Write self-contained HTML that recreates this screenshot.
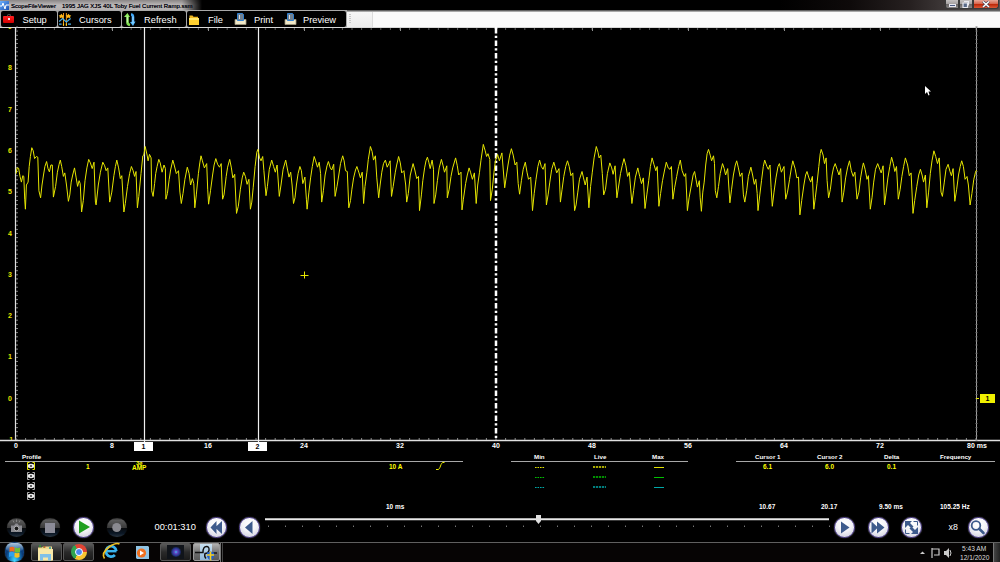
<!DOCTYPE html>
<html><head><meta charset="utf-8">
<style>
*{margin:0;padding:0;box-sizing:border-box}
html,body{width:1000px;height:562px;overflow:hidden;background:#000}
body{position:relative;font-family:"Liberation Sans",sans-serif;color:#fff}
.a{position:absolute}
.title{left:0;top:0;width:1000px;height:11px;background:linear-gradient(90deg,#000 0,#000 78%,#0e0a0a 85%,#262020 91%,#3e3838 94.5%,#5a5252 100%)}
.tglow{left:0;top:0;width:202px;height:10px;background:linear-gradient(90deg,rgba(0,0,0,0) 0,rgba(0,0,0,0) 90%,#000 100%),linear-gradient(180deg,#8a8686 0,#bcb8b8 50%,#b4b0b0 100%)}
.ttext{top:1px;font-size:6px;line-height:10px;color:#0a0a18;white-space:nowrap;text-shadow:0 0 0.4px #000}
.tbar{left:0;top:11px;width:1000px;height:17px;background:#fafafa}
.tbtn{top:11px;height:16px;background:#000;border-radius:2px}
.tlbl{font-size:9.3px;line-height:16px;color:#fff;top:11.5px}
.yl{left:4px;width:12px;text-align:center;font-size:7px;line-height:10px;color:#e8e800;font-weight:bold}
.xl{top:441px;width:30px;text-align:center;font-size:7px;line-height:10px;color:#fff;font-weight:bold}
.hd{font-size:6.2px;line-height:8px;color:#fff;font-weight:bold;top:452.5px;white-space:nowrap}
.yv{font-size:6.5px;line-height:8px;color:#ffff00;font-weight:bold;white-space:nowrap}
.wv{font-size:6.5px;line-height:8px;color:#fff;font-weight:bold;top:502.7px;white-space:nowrap}
.cb{width:21px;height:21px;border-radius:50%;background:radial-gradient(circle at 50% 30%,#fff 0,#f4f4f8 45%,#c8c8d8 100%);border:1px solid #5c4c9c;box-shadow:0 0 1px #888}
.db{width:19.5px;height:19.5px;border-radius:50%;background:linear-gradient(180deg,#2a2a2a 0,#5a5a5a 12%,#3a3a3a 50%,#080a0c 53%,#0a1624 80%,#283440 100%);box-shadow:0 0 1px #222}
.tb{top:543px;height:18px;border:1px solid #555;border-radius:2px;background:linear-gradient(180deg,#5a5a5a 0,#2a2a2a 50%,#1a1a1a 100%)}
</style></head><body>

<div class="a" style="left:0;top:27px;width:16px;height:413px;overflow:hidden"><div class="a yl" style="top:-5.0px">9</div><div class="a yl" style="top:36.3px">8</div><div class="a yl" style="top:77.6px">7</div><div class="a yl" style="top:118.9px">6</div><div class="a yl" style="top:160.2px">5</div><div class="a yl" style="top:201.5px">4</div><div class="a yl" style="top:242.8px">3</div><div class="a yl" style="top:284.1px">2</div><div class="a yl" style="top:325.4px">1</div><div class="a yl" style="top:366.7px">0</div><div class="a yl" style="top:408.0px">-1</div></div>
<!-- Title bar -->
<div class="a title"></div>
<div class="a tglow"></div>
<div class="a" style="left:0;top:1px;width:9px;height:9px;background:linear-gradient(135deg,#6ab0ff,#1a50b0)"></div>
<svg class="a" style="left:0;top:1px" width="9" height="9"><path d="M0 5 L2 5 L3 2 L5 8 L6 4 L9 4" stroke="#fff" stroke-width="1" fill="none"/></svg>
<div class="a ttext" style="left:11px">ScopeFileViewer</div><div class="a ttext" style="left:62px">1995 JAG XJS 40L Toby Fuel Current Ramp.ssm</div>
<div class="a" style="left:945px;top:0;width:14px;height:9px;background:linear-gradient(180deg,#c4c0c0 0,#a8a4a4 45%,#6a6666 55%,#8a8686 100%);border:1px solid #3a3a3a;border-top:0;border-radius:0 0 0 3px"></div>
<div class="a" style="left:949.5px;top:4.5px;width:5.5px;height:1.5px;background:#4a5a80;outline:1px solid #e8e8f0"></div>
<div class="a" style="left:959px;top:0;width:14px;height:9px;background:linear-gradient(180deg,#c4c0c0 0,#a8a4a4 45%,#6a6666 55%,#8a8686 100%);border:1px solid #3a3a3a;border-top:0"></div>
<svg class="a" style="left:959px;top:0" width="14" height="9"><path d="M5 1.5h4.5v4" stroke="#e8e8f0" stroke-width="1.2" fill="none"/><path d="M4 3h4.5v4.5h-4.5z" fill="#5a6a88" stroke="#e8e8f0" stroke-width="1.2"/></svg>
<div class="a" style="left:973px;top:0;width:26px;height:9px;background:linear-gradient(180deg,#e8a898 0,#d86850 45%,#c02808 55%,#d85838 100%);border:1px solid #3a3a3a;border-top:0;border-radius:0 0 3px 0"></div>
<svg class="a" style="left:973px;top:0" width="26" height="9"><path d="M10 1.5 L16 7 M16 1.5 L10 7" stroke="#3a3a50" stroke-width="2.6"/><path d="M10 1.5 L16 7 M16 1.5 L10 7" stroke="#fff" stroke-width="1.6"/></svg>
<!-- Toolbar -->
<div class="a tbar"></div>
<div class="a" style="left:347px;top:9.5px;width:653px;height:2.5px;background:linear-gradient(180deg,#3a3a3a,#8a8a8a 50%,#c8c8c8)"></div><div class="a" style="left:0;top:9.5px;width:347px;height:1px;background:#606060"></div>
<div class="a" style="left:0;top:10px;width:347px;height:18px;background:#a8a8a8"></div>
<div class="a" style="left:347px;top:12px;width:25px;height:15px;background:linear-gradient(180deg,#f6f6f6,#ececec)"></div>
<div class="a" style="left:372px;top:12px;width:1px;height:15px;background:#dcdcdc"></div>
<svg class="a" style="left:347px;top:12px" width="6" height="15"><path d="M2 2.5h2 M2 4.5h2 M2 6.5h2 M2 8.5h2 M2 10.5h2" stroke="#c8c8c8" stroke-width="1"/></svg>
<div class="a tbtn" style="left:1px;width:56px"></div>
<div class="a tbtn" style="left:58px;width:63px"></div>
<div class="a tbtn" style="left:122px;width:64px"></div>
<div class="a tbtn" style="left:187px;width:159px"></div>
<!-- icons -->
<div class="a" style="left:3px;top:15.5px;width:11px;height:7.5px;background:linear-gradient(180deg,#ff2020,#d00000);border-radius:1px"></div>
<div class="a" style="left:6.5px;top:14px;width:4px;height:2px;border:1px solid #555;border-bottom:0;border-radius:2px 2px 0 0"></div>
<div class="a" style="left:8px;top:18px;width:1.5px;height:1.5px;background:#fff;border-radius:50%"></div>
<svg class="a" style="left:56px;top:10px" width="20" height="18"><path d="M7.5 3v13 M10.4 3v13" stroke="#e89010" stroke-width="1"/><path d="M5.4 3.8 l1.2 1.4 l1.6 0.3 l-1.2 1.2 l0.2 1.6 l-1.8 -0.8 l-1.8 0.8 l0.2 -1.6 l-1.2 -1.2 l1.6 -0.3z M12.5 3.8 l1.2 1.4 l1.6 0.3 l-1.2 1.2 l0.2 1.6 l-1.8 -0.8 l-1.8 0.8 l0.2 -1.6 l-1.2 -1.2 l1.6 -0.3z" fill="#ffb818"/><path d="M3.2 11.5 L6.5 8.5 L10.4 12 L14.6 8.5" stroke="#48b0e8" stroke-width="1.2" fill="none"/><path d="M3 14.2h2.6 M12 14.2h3" stroke="#48b0e8" stroke-width="1.3"/><path d="M7.5 13.5v2 M10.4 13.5v2" stroke="#ffd020" stroke-width="1.2"/></svg>
<svg class="a" style="left:120px;top:10px" width="20" height="18"><path d="M11 4.5 q2 0 2 2.5 V13" stroke="#40a8f8" stroke-width="2.6" fill="none"/><path d="M10 12 L13 16 L15.5 11.5z" fill="#50b8ff"/><path d="M13 6.5 V13.5" stroke="#c8e8ff" stroke-width="0.8"/><path d="M7.5 6 V12.5 q0 2 2.5 2.5" stroke="#80e050" stroke-width="2.6" fill="none"/><path d="M4 7 L7.5 3 L9 5.5 L10 7z" fill="#90f060"/><path d="M7.3 6.5 V12.5" stroke="#e8ffe0" stroke-width="0.8"/></svg>
<svg class="a" style="left:188px;top:12px" width="13" height="13"><path d="M1.5 3.5 h3 l1 1.2 h4.5 v1.5 h-8.5z" fill="#f0b820"/><path d="M1 6 h10 v7 h-10z" fill="#ffd030"/><path d="M1 6 h10 v2 h-10z" fill="#ffe870"/></svg>
<svg class="a" style="left:234px;top:12px" width="13" height="13"><path d="M1 7.5h11v5h-11z" fill="#f0e8c8" stroke="#a09880" stroke-width="0.8"/><path d="M3.5 1.5h5l1 1v6h-6z" fill="#708090" stroke="#3080d0" stroke-width="1"/><path d="M5.5 3v4" stroke="#ddd" stroke-width="1"/></svg>
<svg class="a" style="left:284px;top:12px" width="13" height="13"><path d="M1 7.5h11v5h-11z" fill="#f0e8c8" stroke="#a09880" stroke-width="0.8"/><path d="M3.5 1.5h5l1 1v6h-6z" fill="#708090" stroke="#3080d0" stroke-width="1"/><path d="M5.5 3v4" stroke="#ddd" stroke-width="1"/></svg>

<div class="a tlbl" style="left:22.5px">Setup</div>
<div class="a tlbl" style="left:79px">Cursors</div>
<div class="a tlbl" style="left:144px">Refresh</div>
<div class="a tlbl" style="left:208px">File</div>
<div class="a tlbl" style="left:254px">Print</div>
<div class="a tlbl" style="left:303px">Preview</div>

<!-- Plot -->
<svg class="a" style="left:0;top:0" width="1000" height="562">
  <path d="M0 27.5h1000" stroke="#d8d8d8" stroke-width="1"/>
  <path d="M16.0 28v2 M25.6 28v2 M35.2 28v2 M44.8 28v2 M54.4 28v2 M64.0 28v2 M73.6 28v2 M83.2 28v2 M92.8 28v2 M102.4 28v2 M112.0 28v2 M121.6 28v2 M131.2 28v2 M140.8 28v2 M150.4 28v2 M160.0 28v2 M169.6 28v2 M179.2 28v2 M188.8 28v2 M198.4 28v2 M208.0 28v2 M217.6 28v2 M227.2 28v2 M236.8 28v2 M246.4 28v2 M256.0 28v2 M265.6 28v2 M275.2 28v2 M284.8 28v2 M294.4 28v2 M304.0 28v2 M313.6 28v2 M323.2 28v2 M332.8 28v2 M342.4 28v2 M352.0 28v2 M361.6 28v2 M371.2 28v2 M380.8 28v2 M390.4 28v2 M400.0 28v2 M409.6 28v2 M419.2 28v2 M428.8 28v2 M438.4 28v2 M448.0 28v2 M457.6 28v2 M467.2 28v2 M476.8 28v2 M486.4 28v2 M496.0 28v2 M505.6 28v2 M515.2 28v2 M524.8 28v2 M534.4 28v2 M544.0 28v2 M553.6 28v2 M563.2 28v2 M572.8 28v2 M582.4 28v2 M592.0 28v2 M601.6 28v2 M611.2 28v2 M620.8 28v2 M630.4 28v2 M640.0 28v2 M649.6 28v2 M659.2 28v2 M668.8 28v2 M678.4 28v2 M688.0 28v2 M697.6 28v2 M707.2 28v2 M716.8 28v2 M726.4 28v2 M736.0 28v2 M745.6 28v2 M755.2 28v2 M764.8 28v2 M774.4 28v2 M784.0 28v2 M793.6 28v2 M803.2 28v2 M812.8 28v2 M822.4 28v2 M832.0 28v2 M841.6 28v2 M851.2 28v2 M860.8 28v2 M870.4 28v2 M880.0 28v2 M889.6 28v2 M899.2 28v2 M908.8 28v2 M918.4 28v2 M928.0 28v2 M937.6 28v2 M947.2 28v2 M956.8 28v2 M966.4 28v2 M976.0 28v2" stroke="#707070" stroke-width="0.8"/><path d="M112.5 28v3 M208.5 28v3 M304.5 28v3 M400.5 28v3 M496.5 28v3 M592.5 28v3 M688.5 28v3 M784.5 28v3 M880.5 28v3" stroke="#909090" stroke-width="1"/>
  <path d="M15.5 27v414" stroke="#e0e0e0" stroke-width="1.2"/>
  <path d="M16 27.0h2 M16 31.1h2 M16 35.3h2 M16 39.4h2 M16 43.5h2 M16 47.6h2 M16 51.8h2 M16 55.9h2 M16 60.0h2 M16 64.2h2 M16 68.3h2 M16 72.4h2 M16 76.6h2 M16 80.7h2 M16 84.8h2 M16 88.9h2 M16 93.1h2 M16 97.2h2 M16 101.3h2 M16 105.5h2 M16 109.6h2 M16 113.7h2 M16 117.9h2 M16 122.0h2 M16 126.1h2 M16 130.2h2 M16 134.4h2 M16 138.5h2 M16 142.6h2 M16 146.8h2 M16 150.9h2 M16 155.0h2 M16 159.2h2 M16 163.3h2 M16 167.4h2 M16 171.5h2 M16 175.7h2 M16 179.8h2 M16 183.9h2 M16 188.1h2 M16 192.2h2 M16 196.3h2 M16 200.5h2 M16 204.6h2 M16 208.7h2 M16 212.8h2 M16 217.0h2 M16 221.1h2 M16 225.2h2 M16 229.4h2 M16 233.5h2 M16 237.6h2 M16 241.8h2 M16 245.9h2 M16 250.0h2 M16 254.2h2 M16 258.3h2 M16 262.4h2 M16 266.5h2 M16 270.7h2 M16 274.8h2 M16 278.9h2 M16 283.1h2 M16 287.2h2 M16 291.3h2 M16 295.4h2 M16 299.6h2 M16 303.7h2 M16 307.8h2 M16 312.0h2 M16 316.1h2 M16 320.2h2 M16 324.4h2 M16 328.5h2 M16 332.6h2 M16 336.8h2 M16 340.9h2 M16 345.0h2 M16 349.1h2 M16 353.3h2 M16 357.4h2 M16 361.5h2 M16 365.7h2 M16 369.8h2 M16 373.9h2 M16 378.1h2 M16 382.2h2 M16 386.3h2 M16 390.4h2 M16 394.6h2 M16 398.7h2 M16 402.8h2 M16 407.0h2 M16 411.1h2 M16 415.2h2 M16 419.3h2 M16 423.5h2 M16 427.6h2 M16 431.7h2 M16 435.9h2 M16 440.0h2" stroke="#a0a0a0" stroke-width="0.8"/>
  <path d="M0 440.5h1000" stroke="#e0e0e0" stroke-width="1.5"/>
  <path d="M16.0 440v-2 M25.6 440v-2 M35.2 440v-2 M44.8 440v-2 M54.4 440v-2 M64.0 440v-2 M73.6 440v-2 M83.2 440v-2 M92.8 440v-2 M102.4 440v-2 M112.0 440v-2 M121.6 440v-2 M131.2 440v-2 M140.8 440v-2 M150.4 440v-2 M160.0 440v-2 M169.6 440v-2 M179.2 440v-2 M188.8 440v-2 M198.4 440v-2 M208.0 440v-2 M217.6 440v-2 M227.2 440v-2 M236.8 440v-2 M246.4 440v-2 M256.0 440v-2 M265.6 440v-2 M275.2 440v-2 M284.8 440v-2 M294.4 440v-2 M304.0 440v-2 M313.6 440v-2 M323.2 440v-2 M332.8 440v-2 M342.4 440v-2 M352.0 440v-2 M361.6 440v-2 M371.2 440v-2 M380.8 440v-2 M390.4 440v-2 M400.0 440v-2 M409.6 440v-2 M419.2 440v-2 M428.8 440v-2 M438.4 440v-2 M448.0 440v-2 M457.6 440v-2 M467.2 440v-2 M476.8 440v-2 M486.4 440v-2 M496.0 440v-2 M505.6 440v-2 M515.2 440v-2 M524.8 440v-2 M534.4 440v-2 M544.0 440v-2 M553.6 440v-2 M563.2 440v-2 M572.8 440v-2 M582.4 440v-2 M592.0 440v-2 M601.6 440v-2 M611.2 440v-2 M620.8 440v-2 M630.4 440v-2 M640.0 440v-2 M649.6 440v-2 M659.2 440v-2 M668.8 440v-2 M678.4 440v-2 M688.0 440v-2 M697.6 440v-2 M707.2 440v-2 M716.8 440v-2 M726.4 440v-2 M736.0 440v-2 M745.6 440v-2 M755.2 440v-2 M764.8 440v-2 M774.4 440v-2 M784.0 440v-2 M793.6 440v-2 M803.2 440v-2 M812.8 440v-2 M822.4 440v-2 M832.0 440v-2 M841.6 440v-2 M851.2 440v-2 M860.8 440v-2 M870.4 440v-2 M880.0 440v-2 M889.6 440v-2 M899.2 440v-2 M908.8 440v-2 M918.4 440v-2 M928.0 440v-2 M937.6 440v-2 M947.2 440v-2 M956.8 440v-2 M966.4 440v-2 M976.0 440v-2" stroke="#b0b0b0" stroke-width="0.8"/>
  <path d="M976.5 27v413" stroke="#a0a0a0" stroke-width="1"/>
  <path d="M975.5 27.0h2 M975.5 31.1h2 M975.5 35.3h2 M975.5 39.4h2 M975.5 43.5h2 M975.5 47.6h2 M975.5 51.8h2 M975.5 55.9h2 M975.5 60.0h2 M975.5 64.2h2 M975.5 68.3h2 M975.5 72.4h2 M975.5 76.6h2 M975.5 80.7h2 M975.5 84.8h2 M975.5 88.9h2 M975.5 93.1h2 M975.5 97.2h2 M975.5 101.3h2 M975.5 105.5h2 M975.5 109.6h2 M975.5 113.7h2 M975.5 117.9h2 M975.5 122.0h2 M975.5 126.1h2 M975.5 130.2h2 M975.5 134.4h2 M975.5 138.5h2 M975.5 142.6h2 M975.5 146.8h2 M975.5 150.9h2 M975.5 155.0h2 M975.5 159.2h2 M975.5 163.3h2 M975.5 167.4h2 M975.5 171.5h2 M975.5 175.7h2 M975.5 179.8h2 M975.5 183.9h2 M975.5 188.1h2 M975.5 192.2h2 M975.5 196.3h2 M975.5 200.5h2 M975.5 204.6h2 M975.5 208.7h2 M975.5 212.8h2 M975.5 217.0h2 M975.5 221.1h2 M975.5 225.2h2 M975.5 229.4h2 M975.5 233.5h2 M975.5 237.6h2 M975.5 241.8h2 M975.5 245.9h2 M975.5 250.0h2 M975.5 254.2h2 M975.5 258.3h2 M975.5 262.4h2 M975.5 266.5h2 M975.5 270.7h2 M975.5 274.8h2 M975.5 278.9h2 M975.5 283.1h2 M975.5 287.2h2 M975.5 291.3h2 M975.5 295.4h2 M975.5 299.6h2 M975.5 303.7h2 M975.5 307.8h2 M975.5 312.0h2 M975.5 316.1h2 M975.5 320.2h2 M975.5 324.4h2 M975.5 328.5h2 M975.5 332.6h2 M975.5 336.8h2 M975.5 340.9h2 M975.5 345.0h2 M975.5 349.1h2 M975.5 353.3h2 M975.5 357.4h2 M975.5 361.5h2 M975.5 365.7h2 M975.5 369.8h2 M975.5 373.9h2 M975.5 378.1h2 M975.5 382.2h2 M975.5 386.3h2 M975.5 390.4h2 M975.5 394.6h2 M975.5 398.7h2 M975.5 402.8h2 M975.5 407.0h2 M975.5 411.1h2 M975.5 415.2h2 M975.5 419.3h2 M975.5 423.5h2 M975.5 427.6h2 M975.5 431.7h2 M975.5 435.9h2 M975.5 440.0h2" stroke="#707070" stroke-width="1"/>
  <path d="M496 27.9v412" stroke="#fff" stroke-width="2.5" stroke-dasharray="5.5 2.3 2.4 2.3"/><path d="M496 27v2" stroke="#fff" stroke-width="2.5"/>
  <path d="M144.5 27v416 M258.5 27v416" stroke="#f0f0f0" stroke-width="1.2"/>
  <path d="M16.1 173.6 L17.1 167.9 L18.6 168.2 L20.0 176.4 L21.4 182.1 L22.8 175.7 L23.8 176.4 L24.7 199.2 L25.4 209.2 L26.4 185.0 L28.1 182.1 L29.2 166.5 L30.4 156.5 L31.8 147.7 L33.2 150.8 L34.6 158.6 L36.4 156.5 L37.8 157.2 L38.9 190.7 L40.6 197.8 L42.0 185.0 L43.5 175.0 L44.9 166.5 L46.6 161.5 L48.0 168.6 L49.4 171.9 L50.9 165.0 L52.3 165.0 L53.4 197.1 L55.6 186.4 L57.4 172.2 L59.1 164.3 L60.3 160.1 L61.7 166.5 L63.4 176.4 L64.8 172.9 L66.5 185.0 L68.4 201.3 L69.8 194.9 L71.2 182.1 L72.7 175.0 L74.5 167.9 L76.2 177.9 L77.6 186.4 L79.1 180.7 L80.2 183.6 L81.6 212.0 L83.3 200.6 L85.0 180.7 L86.9 167.9 L88.7 159.4 L90.4 162.9 L92.2 168.6 L94.0 162.2 L95.4 202.1 L96.1 204.9 L98.3 185.0 L100.4 172.2 L102.8 162.2 L104.7 165.8 L106.1 170.7 L107.8 167.9 L109.7 202.1 L111.8 192.1 L113.9 175.7 L115.4 166.5 L116.8 160.1 L118.6 167.9 L120.3 178.6 L121.8 175.7 L123.9 212.0 L125.3 203.5 L127.5 186.4 L129.6 173.6 L131.4 166.5 L133.1 170.7 L134.6 176.4 L136.0 171.5 L137.4 207.8 L138.8 196.4 L141.0 173.6 L142.8 155.8 L143.8 155.1 L145.2 146.5 L147.1 155.1 L148.1 160.8 L149.5 154.4 L151.1 157.9 L151.7 190.7 L153.1 196.4 L154.6 183.6 L155.7 173.6 L157.1 166.5 L158.8 159.4 L160.2 162.9 L162.1 172.2 L164.0 165.0 L165.4 168.6 L165.9 199.2 L167.4 193.5 L169.2 179.3 L170.6 170.0 L172.8 160.1 L174.2 165.0 L176.3 173.6 L178.5 170.7 L179.9 192.1 L181.3 203.5 L183.0 193.5 L184.9 179.3 L187.3 167.2 L189.1 173.6 L190.6 185.0 L192.4 178.6 L193.8 183.6 L194.8 207.8 L196.3 194.9 L198.4 173.6 L199.8 162.9 L201.0 155.8 L202.4 160.8 L204.4 167.9 L206.7 163.6 L207.7 189.2 L208.6 204.2 L210.5 190.7 L212.6 175.0 L214.1 165.0 L215.8 158.6 L217.6 164.3 L219.5 167.2 L221.2 163.6 L222.6 199.2 L224.0 194.9 L226.2 176.4 L227.6 167.2 L229.7 159.4 L231.4 167.9 L232.8 177.9 L234.7 174.3 L236.5 213.4 L238.3 206.3 L240.4 189.2 L242.2 177.9 L243.7 172.2 L245.4 176.4 L247.1 184.3 L248.9 179.3 L250.4 209.2 L251.8 202.1 L253.2 187.8 L255.1 166.5 L256.8 152.2 L257.9 149.4 L259.6 157.9 L261.0 160.8 L262.7 156.5 L263.9 170.7 L266.0 195.7 L267.4 186.4 L269.3 169.3 L271.7 160.1 L273.6 166.5 L275.3 172.2 L277.1 165.0 L279.3 196.4 L281.0 185.0 L283.1 169.3 L285.7 160.1 L287.6 170.0 L289.0 177.1 L290.7 172.2 L292.1 185.0 L293.5 203.5 L295.0 197.8 L296.4 185.0 L298.1 173.6 L299.9 166.5 L301.4 170.7 L302.8 183.6 L304.9 177.1 L306.4 199.2 L307.1 209.2 L308.9 192.1 L310.6 177.9 L312.3 166.5 L314.2 156.5 L315.6 160.8 L317.5 167.2 L319.2 162.2 L320.6 173.6 L321.7 202.1 L323.4 190.7 L325.1 175.0 L327.0 165.8 L328.4 161.5 L330.3 167.9 L331.7 170.0 L333.7 164.3 L335.1 196.4 L337.0 186.4 L338.8 175.0 L340.5 163.6 L342.7 155.8 L344.1 160.8 L345.5 170.7 L347.3 171.5 L348.8 207.8 L350.5 200.6 L351.9 189.2 L353.6 177.9 L355.5 170.0 L356.9 166.5 L359.0 172.9 L360.4 177.9 L362.2 172.2 L363.6 203.5 L365.0 186.4 L366.9 172.2 L368.3 159.4 L370.4 146.5 L372.1 151.5 L373.5 160.1 L375.4 155.8 L376.8 177.9 L378.7 197.8 L380.1 185.0 L381.8 172.2 L383.5 163.6 L385.4 160.1 L387.2 167.2 L388.9 163.6 L390.1 160.8 L391.5 196.4 L393.2 186.4 L395.3 172.2 L396.7 165.0 L398.6 156.5 L400.3 162.9 L401.7 172.9 L403.9 170.7 L405.7 185.0 L406.7 202.1 L408.3 193.5 L410.3 175.0 L412.0 167.9 L413.1 163.6 L414.8 170.0 L416.7 178.6 L418.5 176.4 L419.5 210.6 L421.4 194.9 L422.8 180.7 L424.6 167.9 L426.0 160.8 L427.4 157.2 L428.8 162.2 L430.2 168.6 L432.1 160.1 L433.5 169.3 L434.0 203.5 L435.7 194.9 L437.4 180.7 L439.2 167.9 L441.4 159.4 L443.1 165.8 L444.5 172.2 L446.8 165.8 L447.3 197.8 L449.2 189.2 L451.0 176.4 L452.7 167.9 L455.6 157.9 L457.3 165.8 L458.7 175.0 L461.0 172.2 L462.0 209.9 L463.4 199.2 L465.6 183.6 L467.3 175.0 L469.1 167.9 L470.5 172.2 L472.4 179.3 L474.4 172.9 L476.2 203.5 L477.7 185.0 L479.5 172.2 L480.9 160.8 L483.3 144.4 L485.2 150.8 L486.6 156.5 L488.0 153.7 L489.8 159.4 L490.5 200.6 L492.3 189.2 L494.0 172.2 L495.4 160.8 L497.6 154.4 L499.4 160.8 L501.9 152.9 L503.7 175.0 L504.7 187.8 L506.1 177.9 L508.0 165.0 L509.7 155.1 L511.4 148.7 L513.2 155.1 L515.1 165.0 L516.8 162.2 L518.2 183.6 L519.6 194.2 L521.4 180.7 L523.2 169.3 L525.3 162.2 L527.0 172.2 L528.5 179.3 L530.7 177.1 L532.5 210.6 L534.2 193.5 L536.0 179.3 L537.9 166.5 L539.6 160.1 L541.3 166.5 L543.1 169.3 L545.0 163.6 L546.4 204.9 L548.1 194.9 L549.8 182.1 L551.7 169.3 L553.8 162.2 L555.0 166.5 L556.7 172.9 L559.0 168.6 L560.4 202.1 L562.1 189.2 L563.8 176.4 L565.7 166.5 L567.5 160.8 L569.2 166.5 L570.9 175.7 L572.8 172.9 L574.6 210.6 L576.1 204.9 L577.8 192.1 L579.5 179.3 L582.0 171.5 L583.5 177.9 L585.2 185.0 L587.0 177.1 L588.9 207.8 L590.6 186.4 L592.3 172.2 L594.1 157.9 L596.3 146.5 L598.0 152.2 L599.1 157.9 L600.8 155.1 L602.3 173.6 L603.7 194.9 L605.5 189.2 L607.4 173.6 L609.8 162.9 L611.7 167.9 L613.1 174.3 L615.1 165.8 L616.9 197.8 L618.8 185.0 L620.5 173.6 L622.2 165.8 L624.0 158.6 L625.9 165.8 L627.6 176.4 L629.3 172.2 L631.9 203.5 L633.6 190.7 L635.4 177.1 L637.8 167.9 L639.7 176.4 L641.5 183.6 L643.3 177.9 L645.0 208.5 L646.8 194.9 L648.7 180.7 L650.4 166.5 L652.1 157.9 L653.9 164.3 L655.8 170.7 L657.2 166.5 L658.9 206.3 L660.6 193.5 L662.5 180.7 L664.6 170.0 L666.3 162.2 L668.2 167.9 L670.0 169.3 L671.4 166.5 L672.9 199.2 L674.6 187.8 L676.7 176.4 L678.6 166.5 L680.3 160.1 L682.1 170.7 L684.3 176.4 L685.7 173.6 L687.4 210.6 L689.1 197.8 L691.4 185.0 L693.1 175.0 L694.6 171.5 L696.0 179.3 L697.4 187.1 L699.3 180.7 L700.2 197.8 L701.4 211.3 L702.8 192.1 L704.2 182.1 L705.7 165.0 L707.1 153.7 L708.5 149.4 L710.2 155.1 L711.6 160.8 L713.5 155.8 L714.5 163.6 L715.3 190.7 L716.8 197.8 L718.5 186.4 L720.2 173.6 L722.5 163.6 L724.2 168.6 L725.6 175.0 L727.7 168.6 L728.7 185.0 L729.9 202.8 L731.6 189.2 L733.4 175.0 L735.3 165.0 L736.7 160.8 L738.4 167.9 L740.1 176.4 L742.0 172.9 L743.4 194.9 L744.8 202.1 L746.7 190.7 L748.4 176.4 L750.9 167.2 L752.6 175.0 L754.3 184.3 L755.8 179.3 L757.2 193.5 L758.0 210.6 L759.8 194.9 L761.5 180.7 L763.3 166.5 L764.7 160.1 L766.9 166.5 L768.3 169.3 L770.0 165.0 L771.1 187.8 L772.3 206.3 L774.0 192.1 L776.1 177.1 L778.0 166.5 L779.4 163.6 L781.4 172.2 L784.0 166.5 L785.7 199.2 L787.5 192.1 L789.6 179.3 L791.4 167.9 L792.8 160.8 L795.1 168.6 L796.8 177.9 L798.5 177.1 L799.9 214.9 L801.7 200.6 L803.9 185.0 L805.6 175.0 L807.0 171.5 L808.9 177.9 L810.7 182.1 L812.4 176.4 L813.8 209.2 L815.3 197.8 L817.0 183.6 L818.8 166.5 L820.2 153.7 L821.2 149.4 L823.1 155.1 L824.5 163.6 L826.1 157.9 L827.1 180.7 L828.6 197.8 L830.4 189.2 L832.1 175.0 L833.5 167.9 L835.2 163.6 L837.1 169.3 L839.0 175.0 L840.7 168.6 L842.1 202.1 L843.8 192.1 L845.6 177.9 L847.5 167.9 L849.5 160.8 L851.3 170.7 L853.2 176.4 L854.9 172.2 L857.0 199.2 L858.9 192.1 L860.6 177.9 L862.3 167.9 L863.4 162.9 L865.1 169.3 L867.0 179.3 L868.4 175.7 L870.3 209.2 L872.0 197.8 L873.7 182.1 L875.5 169.3 L877.7 163.6 L879.8 169.3 L881.2 172.9 L883.1 165.8 L884.5 204.9 L886.2 192.1 L887.9 177.9 L889.8 166.5 L891.6 157.2 L893.3 163.6 L894.8 171.5 L896.5 166.5 L898.3 199.2 L900.2 189.2 L901.9 176.4 L903.6 166.5 L905.4 157.9 L907.6 165.0 L909.3 175.7 L911.1 172.9 L913.0 213.4 L914.7 200.6 L916.8 186.4 L918.7 175.0 L920.4 169.3 L922.1 175.0 L923.5 182.1 L925.4 175.0 L926.8 207.8 L928.6 192.1 L930.3 173.6 L932.0 160.8 L933.9 150.8 L935.7 156.5 L937.5 163.6 L939.2 157.9 L941.0 192.1 L942.4 196.4 L944.3 182.1 L946.0 169.3 L948.1 164.3 L950.0 171.5 L951.4 175.7 L953.1 168.6 L954.8 201.3 L956.7 189.2 L958.5 175.0 L960.2 166.5 L961.7 160.8 L963.4 166.5 L965.1 179.3 L967.0 176.5 L968.4 185.0 L970.1 205.0 L971.9 193.6 L973.8 179.3 L975.5 172.2 L976.5 170.1" stroke="#e6e600" stroke-width="1" fill="none" stroke-linejoin="round"/>
  <path d="M300.5 275.5h8 M304.5 271.5v7" stroke="#e8e800" stroke-width="1"/>
  <path d="M925 86 L925 94 L927 92 L928.5 95.5 L929.5 95 L928.5 91.5 L931 91.5z" fill="#fff"/>
  <path d="M976 398.5h3" stroke="#e8e800" stroke-width="1"/>
</svg>
<div class="a" style="left:980px;top:394px;width:15px;height:9px;background:#f0f000;color:#000;font-size:7px;line-height:9px;text-align:center;font-weight:bold">1</div>
<div class="a xl" style="left:1px">0</div><div class="a xl" style="left:97px">8</div><div class="a xl" style="left:193px">16</div><div class="a xl" style="left:289px">24</div><div class="a xl" style="left:385px">32</div><div class="a xl" style="left:481px">40</div><div class="a xl" style="left:577px">48</div><div class="a xl" style="left:673px">56</div><div class="a xl" style="left:769px">64</div><div class="a xl" style="left:865px">72</div><div class="a xl" style="left:967px;width:30px;text-align:left">80 ms</div>
<div class="a" style="left:134px;top:442px;width:19px;height:9px;background:#fff;color:#000;font-size:7px;line-height:9px;text-align:center;font-weight:bold">1</div>
<div class="a" style="left:248px;top:442px;width:19px;height:9px;background:#fff;color:#000;font-size:7px;line-height:9px;text-align:center;font-weight:bold">2</div>

<!-- Bottom panel -->
<svg class="a" style="left:0;top:0" width="1000" height="562">
  <path d="M5 461.5h458 M511 461.5h177 M736 461.5h259" stroke="#a8a8a8" stroke-width="1"/>
  <path d="M535 467.5h10" stroke="#e0e000" stroke-width="1" stroke-dasharray="1.6 0.9"/>
  <path d="M535 477.5h10" stroke="#00c000" stroke-width="1" stroke-dasharray="1.6 0.9"/>
  <path d="M535 487.5h10" stroke="#00a8a8" stroke-width="1" stroke-dasharray="1.6 0.9"/>
  <path d="M593 467h13" stroke="#e0e000" stroke-width="1.6" stroke-dasharray="2.2 0.8"/>
  <path d="M593 477h13" stroke="#00c000" stroke-width="1.6" stroke-dasharray="2.2 0.8"/>
  <path d="M593 487h13" stroke="#00a8a8" stroke-width="1.6" stroke-dasharray="2.2 0.8"/>
  <path d="M654 467.5h10" stroke="#e0e000" stroke-width="1"/>
  <path d="M654 477.5h10" stroke="#00c000" stroke-width="1"/>
  <path d="M654 487.5h10" stroke="#00a8a8" stroke-width="1"/>
  <path d="M436 469.5 h2 C440.5 469.5 440.5 462.5 443 462.5 h1.5" stroke="#e8e800" stroke-width="1" fill="none"/>
  <path d="M265 519.2h564" stroke="#e8e8e8" stroke-width="2"/>
  <path d="M268.0 526.2h1 M285.0 526.2h1 M302.0 526.2h1 M319.0 526.2h1 M336.0 526.2h1 M353.0 526.2h1 M370.0 526.2h1 M387.0 526.2h1 M404.0 526.2h1 M421.0 526.2h1 M438.0 526.2h1 M455.0 526.2h1 M472.0 526.2h1 M489.0 526.2h1 M506.0 526.2h1 M523.0 526.2h1 M540.0 526.2h1 M557.0 526.2h1 M574.0 526.2h1 M591.0 526.2h1 M608.0 526.2h1 M625.0 526.2h1 M642.0 526.2h1 M659.0 526.2h1 M676.0 526.2h1 M693.0 526.2h1 M710.0 526.2h1 M727.0 526.2h1 M744.0 526.2h1 M761.0 526.2h1 M778.0 526.2h1 M795.0 526.2h1 M812.0 526.2h1 M829.0 526.2h1" stroke="#aaa" stroke-width="1"/>
  <path d="M536 515h5v6l-2.5 3l-2.5-3z" fill="#e0e0e0"/>
  <path d="M0 542.5h1000" stroke="#606060" stroke-width="1"/>
</svg>
<div class="a hd" style="left:22px">Profile</div>
<div class="a hd" style="left:534px">Min</div>
<div class="a hd" style="left:594px">Live</div>
<div class="a hd" style="left:652px">Max</div>
<div class="a hd" style="left:755px">Cursor 1</div>
<div class="a hd" style="left:817px">Cursor 2</div>
<div class="a hd" style="left:884px">Delta</div>
<div class="a hd" style="left:940px">Frequency</div>
<div class="a yv" style="left:86px;top:462.8px">1</div>
<div class="a yv" style="left:136px;top:461px;font-size:5.5px;line-height:5px">3ø</div>
<div class="a yv" style="left:132px;top:464.3px">AMP</div>
<div class="a yv" style="left:389px;top:462.8px">10 A</div>
<div class="a yv" style="left:763px;top:462.8px">6.1</div>
<div class="a yv" style="left:825px;top:462.8px">6.0</div>
<div class="a yv" style="left:887px;top:462.8px">0.1</div>
<div class="a wv" style="left:386px">10 ms</div>
<div class="a wv" style="left:759px">10.67</div>
<div class="a wv" style="left:821px">20.17</div>
<div class="a wv" style="left:879px">9.50 ms</div>
<div class="a wv" style="left:940px">105.25 Hz</div>
<!-- eye icons -->
<svg class="a" style="left:0;top:0" width="60" height="510">
<path d="M29.5 462.5h-2v7h2 M32.5 462.5h2v7h-2" stroke="#e8e800" stroke-width="1" fill="none"/><ellipse cx="31" cy="466.0" rx="3.3" ry="2.2" fill="#e8e8e8"/><circle cx="31" cy="466.0" r="1" fill="#333"/><path d="M29.5 472.5h-2v7h2 M32.5 472.5h2v7h-2" stroke="#b0b0b0" stroke-width="1" fill="none"/><ellipse cx="31" cy="476.0" rx="3.3" ry="2.2" fill="#e8e8e8"/><circle cx="31" cy="476.0" r="1" fill="#333"/><path d="M29.5 482.5h-2v7h2 M32.5 482.5h2v7h-2" stroke="#b0b0b0" stroke-width="1" fill="none"/><ellipse cx="31" cy="486.0" rx="3.3" ry="2.2" fill="#e8e8e8"/><circle cx="31" cy="486.0" r="1" fill="#333"/><path d="M29.5 492.5h-2v7h2 M32.5 492.5h2v7h-2" stroke="#b0b0b0" stroke-width="1" fill="none"/><ellipse cx="31" cy="496.0" rx="3.3" ry="2.2" fill="#e8e8e8"/><circle cx="31" cy="496.0" r="1" fill="#333"/>
</svg>
<!-- Controls row -->
<div class="a db" style="left:6.7px;top:517.7px"></div>
<div class="a db" style="left:40px;top:517.7px"></div>
<div class="a cb" style="left:73px;top:517px"></div>
<div class="a db" style="left:107px;top:517.7px"></div>
<svg class="a" style="left:0;top:505px" width="140" height="40">
  <path d="M11 20.5h3l1.5 -2h2l1.5 2h3v6.5h-11z" fill="#8a8a90"/><circle cx="16.5" cy="23.5" r="2.3" fill="#1a1a1a" stroke="#c0c0c0" stroke-width="0.8"/><path d="M16.5 14.5v2.5 M13 15.5l1 2 M20 15.5l-1 2" stroke="#888" stroke-width="0.9"/>
  <path d="M45 18h10v10h-10z" fill="#8c8c98"/>
  <path d="M79 15.5 L90 22 L79 28.5z" fill="#20a020"/>
  <circle cx="116.7" cy="22.5" r="4.5" fill="#8a8a90"/>
</svg>
<div class="a" style="left:154.5px;top:522px;font-size:9.3px;line-height:11px;color:#fff">00:01:310</div>
<div class="a cb" style="left:206px;top:517px"></div>
<div class="a cb" style="left:239px;top:517px"></div>
<div class="a cb" style="left:834px;top:517px"></div>
<div class="a cb" style="left:868px;top:517px"></div>
<div class="a cb" style="left:901px;top:517px"></div>
<div class="a cb" style="left:968px;top:517px"></div>
<svg class="a" style="left:0;top:505px" width="1000" height="40">
  <path d="M210.5 22.5 L216.5 16 L216.5 29z M215 22.5 L222 16 L222 29z" fill="#3d5a8c"/>
  <path d="M245 22.5 L252.5 16 L252.5 29z" fill="#3d5a8c"/>
  <path d="M841 16.5 L849.5 22.5 L841 28.5z" fill="#3d5a8c"/>
  <path d="M871.5 16.5 L878 22.5 L871.5 28.5z M877 16.5 L884.5 22.5 L877 28.5z" fill="#3d5a8c"/>
  <path d="M905 16 h7 l-2 2 l3.5 3.5 l-2 2 l-3.5 -3.5 l-3 3z M918 29 h-7 l2 -2 l-3.5 -3.5 l2 -2 l3.5 3.5 l3 -3z" fill="#3d5a8c"/>
  <path d="M913.5 16.5h4v4 M905.5 24.5v4h4" stroke="#3d5a8c" stroke-width="1" fill="none"/>
  <circle cx="976" cy="20.5" r="4.3" stroke="#3d5a8c" stroke-width="1.8" fill="none"/>
  <path d="M979.2 23.8 L983.5 28" stroke="#3d5a8c" stroke-width="2.6" stroke-linecap="round"/>
</svg>
<div class="a" style="left:948.5px;top:522px;font-size:8.8px;line-height:11px;color:#fff">x8</div>

<!-- Taskbar -->
<div class="a" style="left:0;top:543px;width:1000px;height:19px;background:#060404"></div>
<div class="a" style="left:4.5px;top:542px;width:19.5px;height:19.5px;border-radius:50%;background:radial-gradient(ellipse at 50% 95%,#40d8ff 0,#1a80c0 35%,#0a3a78 65%,#1a5aa0 100%);box-shadow:0 0 1px #6aa0d0"></div>
<div class="a" style="left:6px;top:543px;width:16.5px;height:8px;border-radius:8px 8px 4px 4px;background:linear-gradient(180deg,rgba(230,245,255,.75),rgba(120,180,230,.15))"></div>
<svg class="a" style="left:0;top:540px" width="30" height="22">
 <path d="M9.5 7.5 q2.5 -1.5 5 0 v4.5 q-2.5 -1.5 -5 0z" fill="#f06a20"/>
 <path d="M15 7.5 q2.5 1.5 5 0 v4.5 q-2.5 1.5 -5 0z" fill="#70c030"/>
 <path d="M9 12.5 q2.5 -1.5 5 0 v4.5 q-2.5 -1.5 -5 0z" fill="#30a0f0"/>
 <path d="M14.5 12.5 q2.5 1.5 5 0 v4.5 q-2.5 1.5 -5 0z" fill="#f8c020"/>
</svg>
<div class="a tb" style="left:31px;width:31px"></div>
<svg class="a" style="left:31px;top:542px" width="31" height="20">
 <path d="M7 5.5 h4 l1 -1 h9 v14 h-14z" fill="#f0dc90"/>
 <path d="M7 7 h15 v11.5 h-15z" fill="#f8e8a8"/>
 <path d="M8 4 h2 M12 5 h2 M18 6 h2" stroke="#20c020" stroke-width="1.2"/>
 <path d="M12.5 5 h2" stroke="#e03020" stroke-width="1.2"/><path d="M18 6 h2" stroke="#2080e0" stroke-width="1.2"/>
 <path d="M9 12 h11 v6.5 h-3 v-3 h-5 v3 h-3z" fill="#80c0e8"/>
</svg>
<div class="a tb" style="left:63px;width:31px"></div>
<div class="a" style="left:70.5px;top:544px;width:16px;height:16px;border-radius:50%;background:conic-gradient(from -30deg,#e04434 0 120deg,#f8c430 120deg 240deg,#30a450 240deg 360deg)"></div>
<div class="a" style="left:74.5px;top:548px;width:8px;height:8px;border-radius:50%;background:#4a88f0;border:1.3px solid #fff"></div>
<svg class="a" style="left:0;top:0" width="130" height="562">
 <path d="M116.3 551 A5.2 5.2 0 1 0 114.9 555" stroke="#3ab4f0" stroke-width="2.8" fill="none"/>
 <path d="M106 551.2 h10.5" stroke="#3ab4f0" stroke-width="2.4"/>
 <path d="M104.5 558.5 Q101 553 109 547 Q116 542 119.5 544" stroke="#f0c020" stroke-width="1.6" fill="none"/>
</svg>
<svg class="a" style="left:134px;top:544px" width="18" height="16">
 <path d="M2 2 h12 l1 1 v12 h-12 l-1 -1z" fill="#90c4e4"/>
 <circle cx="7.5" cy="9" r="4.6" fill="#f07020"/>
 <path d="M6 6.5 L10 9 L6 11.5z" fill="#fff"/>
</svg>
<div class="a tb" style="left:160px;width:31px"></div>
<div class="a" style="left:167px;top:544.5px;width:17px;height:14.5px;background:#10141a"></div>
<div class="a" style="left:170.5px;top:547px;width:10px;height:10px;border-radius:50%;background:radial-gradient(circle,#40c0f0 0,#6040c0 25%,#2a3a90 50%,#182050 70%,#a0b0d0 90%)"></div>
<div class="a tb" style="left:193px;width:27px;background:linear-gradient(180deg,#b0b0b0,#6a6a6a 60%,#585858);border-color:#999"></div>
<div class="a" style="left:200px;top:544px;width:12px;height:16px;background:linear-gradient(180deg,#c8e0f0,#90b8d8)"></div>
<svg class="a" style="left:193px;top:542px" width="28" height="20">
 <path d="M2 10.5 h8 q0 -6 3.5 -6 q3 0 2.5 4 q-1 3 -4 3 q-1 3 1 5" stroke="#111" stroke-width="1.4" fill="none"/>
 <path d="M14 11 h10" stroke="#111" stroke-width="1.4"/>
 <path d="M14 10.5 l3.5 -1 l3.5 1 v3 q0 3 -3.5 5 q-3.5 -2 -3.5 -5z" fill="#2060d0"/>
 <path d="M17.5 9.5 v9 M14 13 h7" stroke="#f8d020" stroke-width="1.6"/>
</svg>
<div class="a" style="left:220px;top:543px;width:1px;height:19px;background:#777"></div>
<div class="a" style="left:222px;top:543px;width:1px;height:19px;background:#444"></div>
<svg class="a" style="left:915px;top:543px" width="45" height="19"><path d="M5 11 L7.5 8.5 L10 11z" fill="#ccc"/><path d="M17 6h7v6h-5 M17 5v10" stroke="#ccc" stroke-width="1.2" fill="none"/><path d="M29 8h2l3-3v10l-3-3h-2z" fill="#ccc"/><path d="M35 7q2 3 0 6" stroke="#ccc" fill="none"/></svg>
<div class="a" style="left:962px;top:544px;font-size:6.6px;line-height:9px;color:#ddd">5:43 AM</div>
<div class="a" style="left:960px;top:553px;font-size:6.6px;line-height:9px;color:#ddd">12/1/2020</div>
<div class="a" style="left:993px;top:543px;width:7px;height:19px;background:linear-gradient(90deg,#444,#222);border-left:1px solid #777"></div>
</body></html>
